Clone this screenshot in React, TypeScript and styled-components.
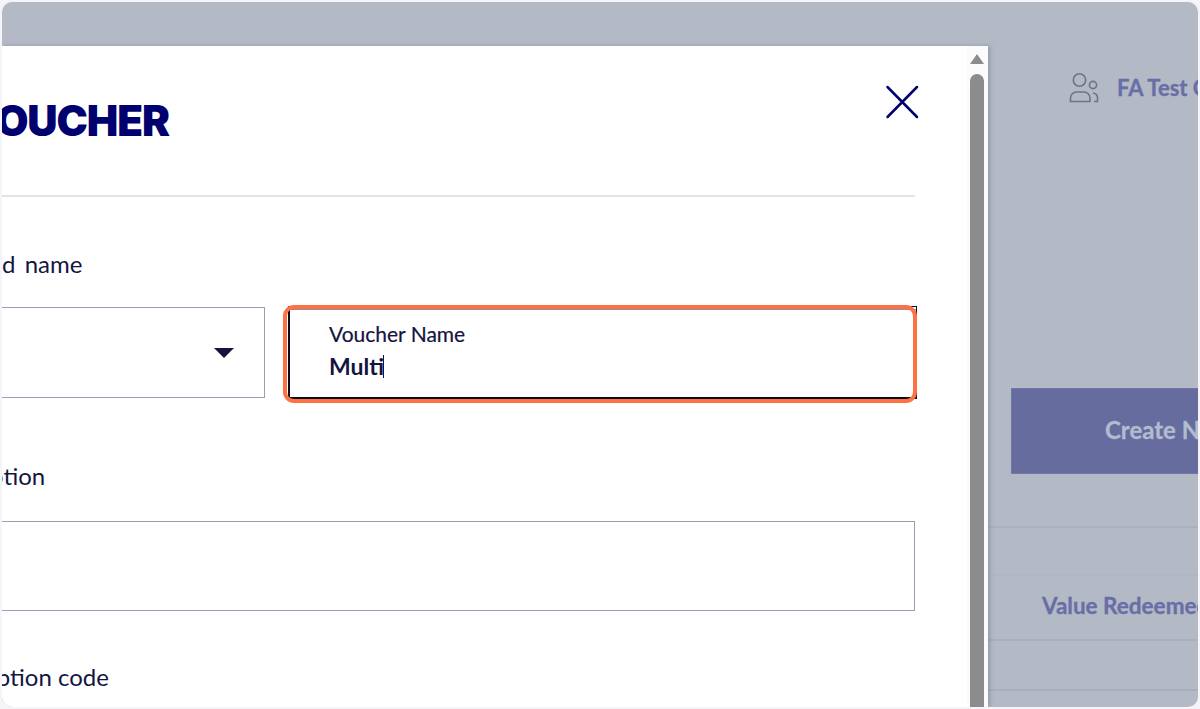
import React from "react";
import styled, { createGlobalStyle } from "styled-components";

const Global = createGlobalStyle`
  html, body { margin: 0; padding: 0; background: #f4f4f9; }
  body { font-family: "Lato", "Liberation Sans", sans-serif; overflow: hidden; }
`;

const Frame = styled.div`
  box-sizing: border-box;
  margin: 2px;
  width: 1196px;
  height: 705px;
  border-radius: 10px;
  overflow: hidden;
  background: #b3b9c5;
  display: flex;
  flex-direction: column;
`;

const TopStrip = styled.div`
  flex: 0 0 44px;
`;

const Stage = styled.div`
  flex: 1;
  min-height: 0;
  display: flex;
`;

const Modal = styled.section`
  flex: 0 0 986px;
  display: flex;
  background: #fff;
  box-shadow: 2px 0 4px rgba(90, 98, 130, 0.35);
  position: relative;
  z-index: 1;
  overflow: hidden;
`;

const ModalBody = styled.div`
  flex: 0 0 965px;
  overflow: hidden;
`;

const ModalInner = styled.div`
  margin-left: -300px;
  width: 1213px;
`;

const Header = styled.header`
  height: 149px;
  border-bottom: 2px solid #e4e4e6;
  display: flex;
  justify-content: space-between;
  align-items: flex-start;
`;

const Title = styled.h1`
  margin: 51px 0 0 263.5px;
  align-self: flex-start;
  font: 900 42px/48px "Inter", "Lato", sans-serif;
  color: #00006e;
  letter-spacing: -1.1px;
  white-space: nowrap;
`;

const CloseButton = styled.button`
  margin: 39px -4px 0 0;
  padding: 0;
  border: 0;
  background: none;
  width: 34px;
  height: 34px;
  display: block;
`;

const Label = styled.label<{ $top: number; $indent: number; $wordGap?: number }>`
  display: block;
  margin-top: ${(p) => p.$top}px;
  margin-left: ${(p) => p.$indent}px;
  font-size: 24px;
  line-height: 28px;
  word-spacing: ${(p) => p.$wordGap ?? 0}px;
  color: #15163f;
  white-space: nowrap;
`;

const FieldRow = styled.div`
  margin-top: 28px;
  display: grid;
  grid-template-columns: 563px 1fr;
  column-gap: 23px;
`;

const SelectBox = styled.div`
  box-sizing: border-box;
  height: 91px;
  margin-top: 1px;
  border: 1px solid #9a9eb0;
  display: flex;
  align-items: center;
  justify-content: flex-end;
  padding-right: 30px;
`;

const Arrow = styled.span`
  width: 0;
  height: 0;
  border-left: 10px solid transparent;
  border-right: 10px solid transparent;
  border-top: 10px solid #14143f;
`;

const InputBox = styled.div`
  box-sizing: border-box;
  position: relative;
  height: 93px;
  margin-right: -2px;
  border-left: 2px solid #0b0b1e;
  border-bottom: 2px solid #0b0b1e;
  border-top: 1px solid #0b0b1e;
  border-right: 1px solid #0b0b1e;
  padding: 14px 0 0 39px;
  &::before {
    content: "";
    position: absolute;
    left: 0;
    right: 0;
    top: 2px;
    height: 1px;
    background: #8c90a0;
  }
  &::after {
    content: "";
    position: absolute;
    left: -7px;
    top: -2px;
    right: -1px;
    bottom: -6px;
    border: 4px solid #ff7043;
    border-radius: 11px;
  }
`;

const InputLabel = styled.div`
  font-size: 21px;
  line-height: 26px;
  color: #14143f;
  -webkit-text-stroke: 0.2px #14143f;
`;

const InputValue = styled.div`
  margin-top: 5px;
  font-size: 23px;
  line-height: 28px;
  font-weight: 700;
  color: #14143f;
  display: flex;
  align-items: center;
`;

const Caret = styled.span`
  width: 1px;
  height: 23px;
  background: #14143f;
  margin-left: -1px;
`;

const TextArea = styled.div`
  box-sizing: border-box;
  height: 90px;
  margin-top: 31px;
  border: 1px solid #9a9eb0;
`;

const ScrollTrack = styled.div`
  flex: 0 0 18px;
  background: #fbfbfb;
  padding: 8px 0 0 3px;
  display: flex;
  flex-direction: column;
`;

const ScrollArrow = styled.span`
  width: 0;
  height: 0;
  border-left: 7px solid transparent;
  border-right: 7px solid transparent;
  border-bottom: 10px solid #8c8c8c;
`;

const ScrollThumb = styled.div`
  margin-top: 10px;
  width: 14px;
  flex: 1;
  background: #8c8c8c;
  border-radius: 7px 7px 0 0;
`;

const Backdrop = styled.aside`
  flex: 1;
  min-width: 0;
  overflow: hidden;
  display: flex;
  flex-direction: column;
`;

const UserRow = styled.div`
  margin: 25px 0 0 80px;
  display: flex;
  align-items: center;
  gap: 17px;
  height: 34px;
  white-space: nowrap;
  & > svg {
    flex: none;
  }
`;

const UserName = styled.span`
  font-size: 22px;
  font-weight: 700;
  color: #686ea6;
  -webkit-text-stroke: 0.3px #686ea6;
  margin-top: -2px;
`;

const CreateButton = styled.div`
  box-sizing: border-box;
  margin: 283px 0 0 23px;
  height: 86px;
  width: 230px;
  flex: 0 0 auto;
  background: #676c9f;
  border: 1px solid #7177a8;
  display: flex;
  align-items: center;
  padding: 0 0 3px 93px;
  font-size: 24px;
  font-weight: 700;
  color: #b1bccf;
  -webkit-text-stroke: 0.3px #b1bccf;
  white-space: nowrap;
`;

const TableRow = styled.div<{ $h: number; $line: string }>`
  flex: 0 0 auto;
  box-sizing: border-box;
  height: ${(p) => p.$h}px;
  border-bottom: 2px solid ${(p) => p.$line};
  display: flex;
  align-items: center;
  padding: 0 0 4px 54px;
  white-space: nowrap;
`;

const HeaderCell = styled.span`
  font-size: 22.5px;
  font-weight: 700;
  color: #686ea6;
  -webkit-text-stroke: 0.3px #686ea6;
`;

function CloseIcon() {
  return (
    <svg width="34" height="34" viewBox="0 0 34 34" fill="none" stroke="#00006e" strokeWidth="2.5" strokeLinecap="round">
      <path d="M2.5 2 L32 32 M32 2 L2.5 32" />
    </svg>
  );
}

function UsersIcon() {
  return (
    <svg width="32" height="34" viewBox="0 0 32 34" fill="none" stroke="#6f7484" strokeWidth="1.6">
      <circle cx="11.5" cy="9" r="6.2" />
      <circle cx="25" cy="14" r="3.6" />
      <path d="M2.5 30.5 V27 A6 6 0 0 1 8.5 21 H16 A6 6 0 0 1 22 27 V30.5 Z" strokeLinejoin="round" />
      <path d="M25 22 A4.5 4.5 0 0 1 29.5 26.5 V30.5 H26" />
    </svg>
  );
}

export default function App() {
  return (
    <>
      <Global />
      <Frame>
        <TopStrip />
        <Stage>
          <Modal>
            <ModalBody>
              <ModalInner>
                <Header>
                  <Title>VOUCHER</Title>
                  <CloseButton aria-label="Close">
                    <CloseIcon />
                  </CloseButton>
                </Header>
                <Label $top={53} $indent={251} $wordGap={3}>Brand name</Label>
                <FieldRow>
                  <SelectBox>
                    <Arrow />
                  </SelectBox>
                  <InputBox>
                    <InputLabel>Voucher Name</InputLabel>
                    <InputValue>
                      Multi
                      <Caret />
                    </InputValue>
                  </InputBox>
                </FieldRow>
                <Label $top={63} $indent={221}>Description</Label>
                <TextArea />
                <Label $top={52} $indent={222}>Redemption code</Label>
              </ModalInner>
            </ModalBody>
            <ScrollTrack>
              <ScrollArrow />
              <ScrollThumb />
            </ScrollTrack>
          </Modal>
          <Backdrop>
            <UserRow>
              <UsersIcon />
              <UserName>FA Test Company</UserName>
            </UserRow>
            <CreateButton>Create New</CreateButton>
            <TableRow $h={54} $line="#aab1be" />
            <TableRow $h={48} $line="#b0b6c2" />
            <TableRow $h={65} $line="#a9b0bd">
              <HeaderCell>Value Redeemed</HeaderCell>
            </TableRow>
            <TableRow $h={50} $line="#a9b0bd" />
          </Backdrop>
        </Stage>
      </Frame>
    </>
  );
}
